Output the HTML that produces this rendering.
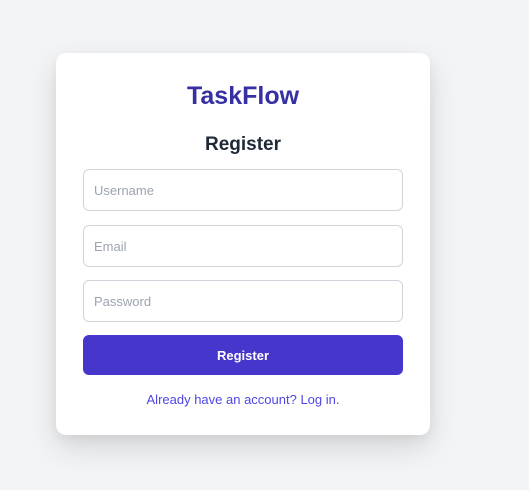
<!DOCTYPE html>
<html><head><style>
*{box-sizing:border-box;margin:0;padding:0}
body{width:529px;height:490px;background:#f3f4f6;font-family:"Liberation Sans",sans-serif;position:relative;overflow:hidden}
.card{position:absolute;left:56px;top:53px;width:374px;height:382px;background:#fff;border-radius:10px;box-shadow:0 12px 30px rgba(0,0,0,0.13),0 4px 10px rgba(0,0,0,0.05)}
.t{position:absolute;left:0;width:100%;text-align:center;font-weight:bold}
.inp{position:absolute;left:27px;width:320px;height:42px;border:1px solid #d1d5db;border-radius:6px;font-size:13px;color:#9ca3af;padding-left:10px;line-height:42px}
.btn{position:absolute;left:27px;top:282px;width:320px;height:40px;background:#4636cb;border-radius:6px;color:#fff;font-size:13px;font-weight:bold;text-align:center;line-height:41px}
</style></head><body>
<div class="card">
<div class="t" style="top:29px;font-size:25px;color:#3730a3">TaskFlow</div>
<div class="t" style="top:81px;font-size:19px;color:#1f2937">Register</div>
<div class="inp" style="top:116px">Username</div>
<div class="inp" style="top:172px">Email</div>
<div class="inp" style="top:227px">Password</div>
<div class="btn">Register</div>
<div class="t" style="top:339px;font-size:13px;font-weight:normal;color:#4f46e5">Already have an account? Log in.</div>
</div>
</body></html>
